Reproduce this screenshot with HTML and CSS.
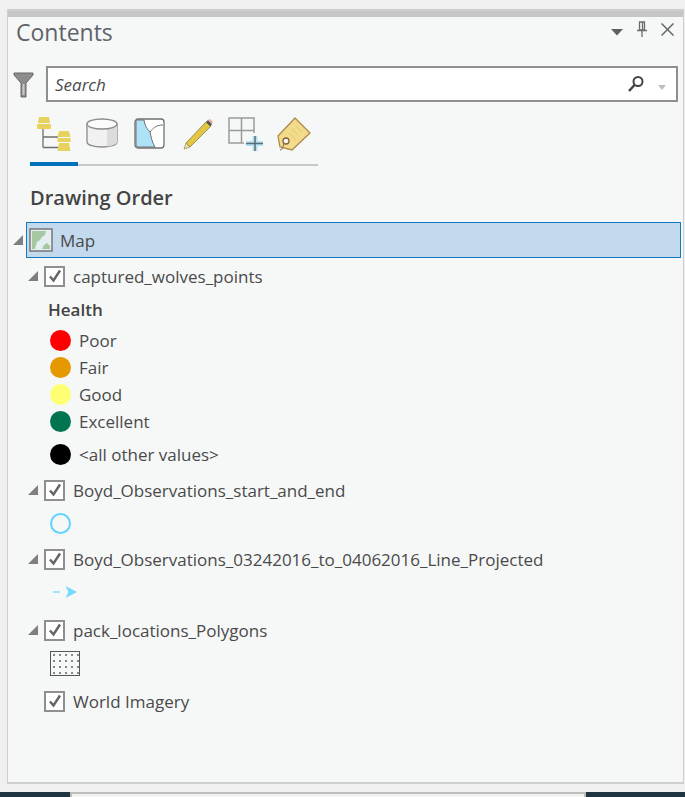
FILE: index.html
```html
<!DOCTYPE html>
<html lang="en">
    <head>
        <meta charset="utf-8" />
        <title>Contents</title>
        <link rel="stylesheet" href="styles.css">
    </head>
    <body>
        <section class="panel">
            <div class="strip"></div>
            <header class="head">
                <h1>Contents</h1>
                <div class="win-btns">
                    <svg class="btn-arrow" width="12" height="7" viewBox="0 0 12 7"><path d="M0 0h12L6 6.500z" fill="#5f5f5f"/></svg>
                    <svg width="12" height="16" viewBox="0 0 12 16"><path d="M3.500 1h5v8h-5zM6.500 1v8M1 9.500h10M6 9.500V16" fill="none" stroke="#6a6a6a" stroke-width="1.300"/></svg>
                    <svg width="13" height="13" viewBox="0 0 13 13"><path d="M.5.500l12 12M12.500.500l-12 12" stroke="#666" stroke-width="1.500"/></svg>
                </div>
            </header>

            <div class="searchbar">
                <svg class="funnel" width="22" height="26" viewBox="0 0 22 26"><path d="M1 1h19v2l-7 8v14H8V11L1 3z" fill="#8d8d8d" stroke="#666"/><path d="M9.500 12v11h2V12z" fill="#c9c9c9"/></svg>
                <div class="search">
                    <span>Search</span>
                    <svg width="18" height="18" viewBox="0 0 18 18"><circle cx="11" cy="6.500" r="4.500" fill="none" stroke="#444" stroke-width="2"/><path d="M7.500 10L2 16" stroke="#444" stroke-width="2.500"/></svg>
                    <svg class="drop" width="8" height="5" viewBox="0 0 8 5"><path d="M0 0h8L4 5z" fill="#bdbdbd"/></svg>
                </div>
            </div>

            <nav class="tabs">
                <div class="tab active">
                    <svg width="36" height="36" viewBox="0 0 36 36">
                        <path d="M7 12v18.500M7 20h15M7 30.500h15" fill="none" stroke="#6e6e6e" stroke-width="1.300"/>
                        <path d="M3 0h10l1 6H2zM1 7h14v5H1z" fill="#e6d25c"/>
                        <path d="M23 14h10l1.500 6h-13zM21.500 21h13v4h-13z" fill="#e6d25c"/>
                        <path d="M23 26h10l1.500 8h-13z" fill="#e6d25c"/>
                    </svg>
                </div>
                <div class="tab">
                    <svg width="34" height="32" viewBox="0 0 34 32">
                        <path d="M2 7v18c0 3 7 5 15 5s15-2 15-5V7z" fill="#f1f1f1" stroke="#8a8a8a" stroke-width="1.300"/>
                        <path d="M22 12v17.500c6-.8 10-2.500 10-4.500V9z" fill="#dcdcdc"/>
                        <ellipse cx="17" cy="7" rx="15" ry="5" fill="#fafafa" stroke="#8a8a8a" stroke-width="1.300"/>
                    </svg>
                </div>
                <div class="tab">
                    <svg width="32" height="33" viewBox="0 0 32 33">
                        <rect x="1" y="2" width="29" height="29" rx="3" fill="#fff" stroke="#707070" stroke-width="1.300"/>
                        <path d="M2 3h8c1 6 3 9 6 12 1 5 2 10 5 15H4a2 2 0 0 1-2-2z" fill="#aee3f7" stroke="#707070"/>
                        <path d="M16 15c3-3 5-7 13-7" fill="none" stroke="#707070"/>
                    </svg>
                </div>
                <div class="tab">
                    <svg width="32" height="34" viewBox="0 0 32 34">
                        <g transform="translate(0 2)">
                        <path d="M4 24L24 3l4.500 4.500L8 28z" fill="#e2c744" stroke="#8a7a30" stroke-width=".8"/>
                        <path d="M24 3l2-2 4 4-1.500 2.500z" fill="#555"/><path d="M26 1l2-1 3 3-1 2z" fill="#eba99a"/>
                        <path d="M4 24l-2 6 6-2z" fill="#e9dcae" stroke="#8a7a30" stroke-width=".6"/>
                        </g>
                    </svg>
                </div>
                <div class="tab">
                    <svg width="36" height="36" viewBox="0 0 36 36">
                        <path d="M1 1h25v25H1zM13.500 1v25M1 13.500h25" fill="none" stroke="#9a9a9a" stroke-width="1.500"/>
                        <rect x="16" y="16" width="20" height="20" fill="#f6f8f7"/>
                        <path d="M27 19v15M18 26.500h17" stroke="#b4e2f6" stroke-width="5"/>
                        <path d="M27 19v15M18 26.500h17" stroke="#5b6b76" stroke-width="1.500"/>
                    </svg>
                </div>
                <div class="tab">
                    <svg width="34" height="36" viewBox="0 0 34 36">
                        <path d="M18 1L33 16 15 33 3 30 1 19z" fill="#f2dc8c" stroke="#b08a4a" stroke-width="1.300"/>
                        <path d="M15 12l6 6M12 16l7 7M19 9l6 6" stroke="#e4c56a"/>
                        <circle cx="9" cy="24" r="3" fill="#f6f8f7" stroke="#8a5f35" stroke-width="1.300"/>
                        <path d="M7 26c-1 3-1 7-4 7" fill="none" stroke="#666"/>
                    </svg>
                </div>
            </nav>

            <h2>Drawing Order</h2>

            <div class="map-row">
                <svg class="twist" width="11" height="11" viewBox="0 0 11 11"><path d="M10 0v10H0z" fill="#7f7f7f"/></svg>
                <svg class="map-ico" width="24" height="24" viewBox="0 0 24 24">
                    <rect x="1" y="1" width="22" height="22" fill="#e4eef3" stroke="#777" stroke-width="1.500"/>
                    <path d="M3 3h14l-1 4-3 2-2 3-3 2-1 3-1 4H3z" fill="#a5c8a0"/>
                    <path d="M13 21l2-4 3-2 2 2 1 1v3z" fill="#a5c8a0"/>
                </svg>
                <span>Map</span>
            </div>

            <div class="layer l-first">
                <svg class="twist" width="11" height="11" viewBox="0 0 11 11"><path d="M10 0v10H0z" fill="#7f7f7f"/></svg>
                <span class="check"><svg width="14" height="14" viewBox="0 0 14 14"><path d="M2 7.500l3.500 4L12 1.500" fill="none" stroke="#666" stroke-width="2.500"/></svg></span>
                <span>captured_wolves_points</span>
            </div>

            <div class="legend-title">Health</div>
            <div class="legend"><i class="dot" style="background:#ff0000"></i>Poor</div>
            <div class="legend"><i class="dot" style="background:#e69800"></i>Fair</div>
            <div class="legend"><i class="dot" style="background:#ffff73"></i>Good</div>
            <div class="legend"><i class="dot" style="background:#007350"></i>Excellent</div>
            <div class="legend other"><i class="dot" style="background:#000000"></i>&lt;all other values&gt;</div>

            <div class="layer l-boyd">
                <svg class="twist" width="11" height="11" viewBox="0 0 11 11"><path d="M10 0v10H0z" fill="#7f7f7f"/></svg>
                <span class="check"><svg width="14" height="14" viewBox="0 0 14 14"><path d="M2 7.500l3.500 4L12 1.500" fill="none" stroke="#666" stroke-width="2.500"/></svg></span>
                <span>Boyd_Observations_start_and_end</span>
            </div>
            <div class="symbol"><i class="ring"></i></div>

            <div class="layer l-line">
                <svg class="twist" width="11" height="11" viewBox="0 0 11 11"><path d="M10 0v10H0z" fill="#7f7f7f"/></svg>
                <span class="check"><svg width="14" height="14" viewBox="0 0 14 14"><path d="M2 7.500l3.500 4L12 1.500" fill="none" stroke="#666" stroke-width="2.500"/></svg></span>
                <span>Boyd_Observations_03242016_to_04062016_Line_Projected</span>
            </div>
            <div class="symbol">
                <svg class="arrow" width="24" height="12" viewBox="0 0 24 12"><path d="M0 6h7" stroke="#a5e4fb" stroke-width="2"/><path d="M12.500 0L24 6 12.500 12l3-6z" fill="#73dafc"/></svg>
            </div>

            <div class="layer l-pack">
                <svg class="twist" width="11" height="11" viewBox="0 0 11 11"><path d="M10 0v10H0z" fill="#7f7f7f"/></svg>
                <span class="check"><svg width="14" height="14" viewBox="0 0 14 14"><path d="M2 7.500l3.500 4L12 1.500" fill="none" stroke="#666" stroke-width="2.500"/></svg></span>
                <span>pack_locations_Polygons</span>
            </div>
            <div class="symbol"><i class="fill"></i></div>

            <div class="layer l-world">
                <span class="check"><svg width="14" height="14" viewBox="0 0 14 14"><path d="M2 7.500l3.500 4L12 1.500" fill="none" stroke="#666" stroke-width="2.500"/></svg></span>
                <span>World Imagery</span>
            </div>
        </section>

        <footer class="taskbar"><div class="tb-mid"></div></footer>
    </body>
</html>
```

FILE: styles.css
```css
* { margin: 0; padding: 0; box-sizing: border-box; }
html, body { height: 797px; overflow: hidden; }
body { background: #f0f0f0; font-family: "Open Sans", sans-serif; color: #4a4a4a; position: relative; }

.panel {
    width: 677px;
    height: 775px;
    margin: 9px 0 0 7px;
    background: #f6f8f7;
    border: 1px solid #cfcfcf;
    border-width: 2px 1px 2px 1px;
}
.strip { height: 6px; background: #c6c6c6; }

.head { height: 34px; display: flex; align-items: center; justify-content: space-between; padding: 0 9px 4px 8px; }
.head h1 { font-size: 23px; font-weight: 400; color: #5f6368; }
.win-btns { display: flex; align-items: center; gap: 13px; margin-top: -6px; }
.btn-arrow { margin-top: 6px; }

.searchbar { display: flex; align-items: center; gap: 11px; margin: 15px 0 0 5px; }
.funnel { flex: none; margin-top: 1px; }
.search {
    width: 632px;
    height: 36px;
    background: #fff;
    border: 2px solid #8f8f8f;
    display: flex;
    align-items: center;
    padding: 0 10px 0 7px;
    font-size: 17px;
    font-style: italic;
    color: #4c4c4c;
}
.search span { flex: 1; }
.drop { margin: 6px 0 0 13px; }

.tabs { display: flex; width: 288px; margin: 13px 0 0 22px; height: 51px; border-bottom: 2px solid #c8c8c8; align-items: flex-start; }
.tab { width: 48px; height: 49px; display: flex; justify-content: center; padding-top: 2px; flex: none; }
.tab.active { height: 51px; border-bottom: 4px solid #0072bc; }

h2 { font-size: 20px; font-weight: 600; color: #444; margin: 19px 0 0 22px; line-height: 26px; }

.map-row {
    width: 655px;
    height: 36px;
    margin: 11px 0 0 18px;
    background: #c3d9ed;
    border: 1px solid #0f7cc0;
    display: flex;
    align-items: center;
    font-size: 17px;
    position: relative;
}
.map-row .twist { position: absolute; left: -14px; top: 12px; }
.map-ico { margin-left: 2px; flex: none; }
.map-row span { margin-left: 7px; }

.layer { height: 28px; display: flex; align-items: center; font-size: 17px; margin-left: 20px; }
.layer .twist { flex: none; margin-right: 5px; }
.l-first { margin-top: 4px; }
.l-boyd { margin-top: 8px; }
.l-line { margin-top: 3px; }
.l-pack { margin-top: 5px; }
.l-world { margin: 5px 0 0 36px; }
.check {
    width: 21px;
    height: 21px;
    border: 2px solid #8f8f8f;
    background: #fff;
    display: flex;
    align-items: center;
    justify-content: center;
    flex: none;
    margin-right: 8px;
}

.legend-title { font-size: 17px; font-weight: 600; color: #444; margin: 6px 0 3px 40px; line-height: 28px; }
.legend { height: 27px; display: flex; align-items: center; font-size: 17px; margin-left: 42px; }
.legend.other { margin-top: 6px; }
.dot { width: 21px; height: 21px; border-radius: 50%; margin-right: 8px; flex: none; }

.symbol { height: 38px; margin-left: 42px; display: flex; align-items: center; }
.ring { width: 21px; height: 21px; border-radius: 50%; border: 2px solid #5fd3fb; }
.arrow { margin-left: 3px; }
.fill {
    width: 30px;
    height: 25px;
    border: 1px solid #555;
    background-image: radial-gradient(circle, #888 1px, transparent 1.200px);
    background-size: 6px 6px;
    background-position: 0 0;
}

.taskbar { position: absolute; left: 0; right: 0; bottom: 0; height: 5px; background: #1f3540; }
.tb-mid { width: 516px; height: 5px; margin-left: 70px; background: #f3f3f3; border: 2px solid #bdbdbd; border-bottom: 0; }
```
